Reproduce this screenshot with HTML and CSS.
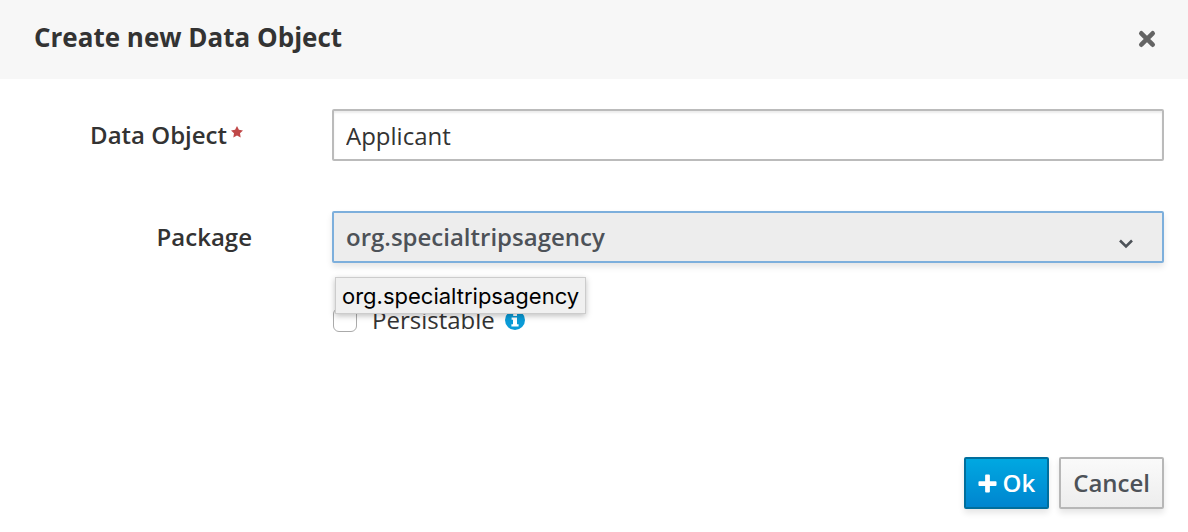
FILE: index.html
```html
<!DOCTYPE html>
<html lang="en">
<head>
<meta charset="utf-8">
<meta name="viewport" content="width=device-width, initial-scale=1">
<title>Create new Data Object</title>
<link rel="stylesheet" href="styles.css">
</head>
<body>
<main class="dialog" role="dialog" aria-labelledby="dialog-title">
  <header class="dialog-header">
    <h1 class="dialog-title" id="dialog-title">Create new Data Object</h1>
    <button class="close" type="button" aria-label="Close">
      <svg class="close-icon" viewBox="0 0 18 18" aria-hidden="true"><path d="M3.3 3.3 14.7 14.7M14.7 3.3 3.3 14.7"/></svg>
    </button>
  </header>
  <form class="dialog-form">
    <div class="row">
      <label class="label label-required" for="data-object">Data Object<svg class="required-icon" viewBox="0 0 12 12" aria-hidden="true"><path d="M6 0 7.9 3.8 12 4.4 9 7.3 9.7 11.5 6 9.5 2.3 11.5 3 7.3 0 4.4 4.1 3.8Z"/></svg></label>
      <input class="text-input" id="data-object" type="text" value="Applicant">
    </div>
    <div class="row">
      <label class="label" for="package">Package</label>
      <div class="select-wrap">
        <select class="select" id="package">
          <option>org.specialtripsagency</option>
        </select>
        <svg class="chevron" viewBox="0 0 14 10" aria-hidden="true"><path d="M1 1.5 7 7.5 13 1.5"/></svg>
        <div class="tooltip" role="tooltip">org.specialtripsagency</div>
      </div>
    </div>
    <div class="row row-check">
      <div class="check">
        <input class="checkbox" id="persistable" type="checkbox">
        <label class="check-label" for="persistable">Persistable</label>
        <svg class="info-icon" viewBox="0 0 20 20" aria-hidden="true"><circle cx="10" cy="10" r="10"/><path d="M8.2 3.2H12V6H8.2ZM6.6 7.5H12V14.3H13.6V16.6H6.4V14.3H8V9.8H6.6Z"/></svg>
      </div>
    </div>
    <footer class="actions">
      <button class="button button-primary" type="submit"><svg class="plus-icon" viewBox="0 0 20 20" aria-hidden="true"><path d="M8.5 .5H11.5Q12.5 .5 12.5 1.5V7.5H18.5Q19.5 7.5 19.5 8.5V11.5Q19.5 12.5 18.5 12.5H12.5V18.5Q12.5 19.5 11.5 19.5H8.5Q7.5 19.5 7.5 18.5V12.5H1.5Q.5 12.5 .5 11.5V8.5Q.5 7.5 1.5 7.5H7.5V1.5Q7.5 .5 8.5 .5Z"/></svg>Ok</button>
      <button class="button" type="button">Cancel</button>
    </footer>
  </form>
</main>
</body>
</html>
```
FILE: styles.css
```css
* {
  box-sizing: border-box;
}

body {
  margin: 0;
  background: #fff;
  color: #333;
  font-family: "Open Sans", "Noto Sans", sans-serif;
  font-size: 24px;
  line-height: 32px;
}

.dialog-header {
  display: flex;
  align-items: flex-end;
  justify-content: space-between;
  padding: 19px 32px 24px 34px;
  background: #f7f7f7;
}

.dialog-title {
  margin: 0;
  font-size: 26px;
  line-height: 36px;
  font-weight: 700;
}

.close {
  display: flex;
  margin: 0;
  padding: 0 0 7px;
  border: 0;
  background: none;
}

.close-icon {
  width: 18px;
  height: 18px;
  fill: none;
  stroke: #646464;
  stroke-width: 4.6;
  stroke-linecap: round;
}

.dialog-form {
  display: flex;
  flex-direction: column;
  gap: 50px;
  padding: 30px 24px 23px;
}

.row {
  display: grid;
  grid-template-columns: 20% 1fr;
  column-gap: 80px;
  align-items: center;
}

.label {
  justify-self: end;
  font-weight: 600;
}

.label-required {
  display: flex;
  padding-right: 9px;
}

.required-icon {
  width: 12px;
  height: 12px;
  margin: 7px 0 0 4px;
  fill: #c04848;
}

.text-input,
.select {
  width: 100%;
  height: 52px;
  margin: 0;
  padding: 0 12px;
  border: 2px solid #bbb;
  border-radius: 2px;
  font: inherit;
}

.text-input {
  background: #fff;
  color: #333;
  box-shadow: inset 0 2px 2px rgba(3, 3, 3, 0.08);
}

.select-wrap {
  position: relative;
}

.select {
  display: block;
  appearance: none;
  border-color: #7dafdc;
  background: #ededed;
  color: #4d5258;
  font-weight: 600;
  box-shadow: 0 4px 6px rgba(3, 3, 3, 0.1);
}

.chevron {
  position: absolute;
  right: 31px;
  top: 28px;
  width: 14px;
  height: 10px;
  fill: none;
  stroke: #4d5258;
  stroke-width: 2.6;
  pointer-events: none;
}

.tooltip {
  position: absolute;
  z-index: 1;
  left: 3px;
  top: 66px;
  padding: 2px 6px 1px;
  border: 1px solid #ccc;
  background: #f0f0f0;
  color: #000;
  font-family: Inter, "Liberation Sans", sans-serif;
  font-size: 22px;
  box-shadow: 0 2px 6px rgba(0, 0, 0, 0.25);
}

.row-check {
  margin-top: -9px;
}

.check {
  grid-column: 2;
  display: flex;
  align-items: center;
}

.checkbox {
  appearance: none;
  width: 24px;
  height: 24px;
  margin: 0 15px 0 1px;
  border: 1px solid #aaa;
  border-radius: 6px;
  background: #fff;
}

.info-icon {
  width: 20px;
  height: 20px;
  margin-left: 10px;
  fill: #0a9bd7;
}

.info-icon path {
  fill: #fff;
}

.actions {
  display: flex;
  justify-content: flex-end;
  gap: 10px;
  padding-top: 71px;
}

.button {
  display: flex;
  align-items: center;
  gap: 6px;
  height: 52px;
  margin: 0;
  padding: 0 12px;
  border: 2px solid #b7b7b7;
  border-radius: 2px;
  background: linear-gradient(#fafafa, #ededed);
  color: #4d5258;
  font: inherit;
  font-weight: 600;
  box-shadow: 0 4px 6px rgba(3, 3, 3, 0.1);
}

.button-primary {
  border-color: #006e9c;
  background: linear-gradient(#00a8e1, #0085cf);
  color: #fff;
}

.plus-icon {
  width: 19px;
  height: 19px;
  fill: #fff;
}
```
